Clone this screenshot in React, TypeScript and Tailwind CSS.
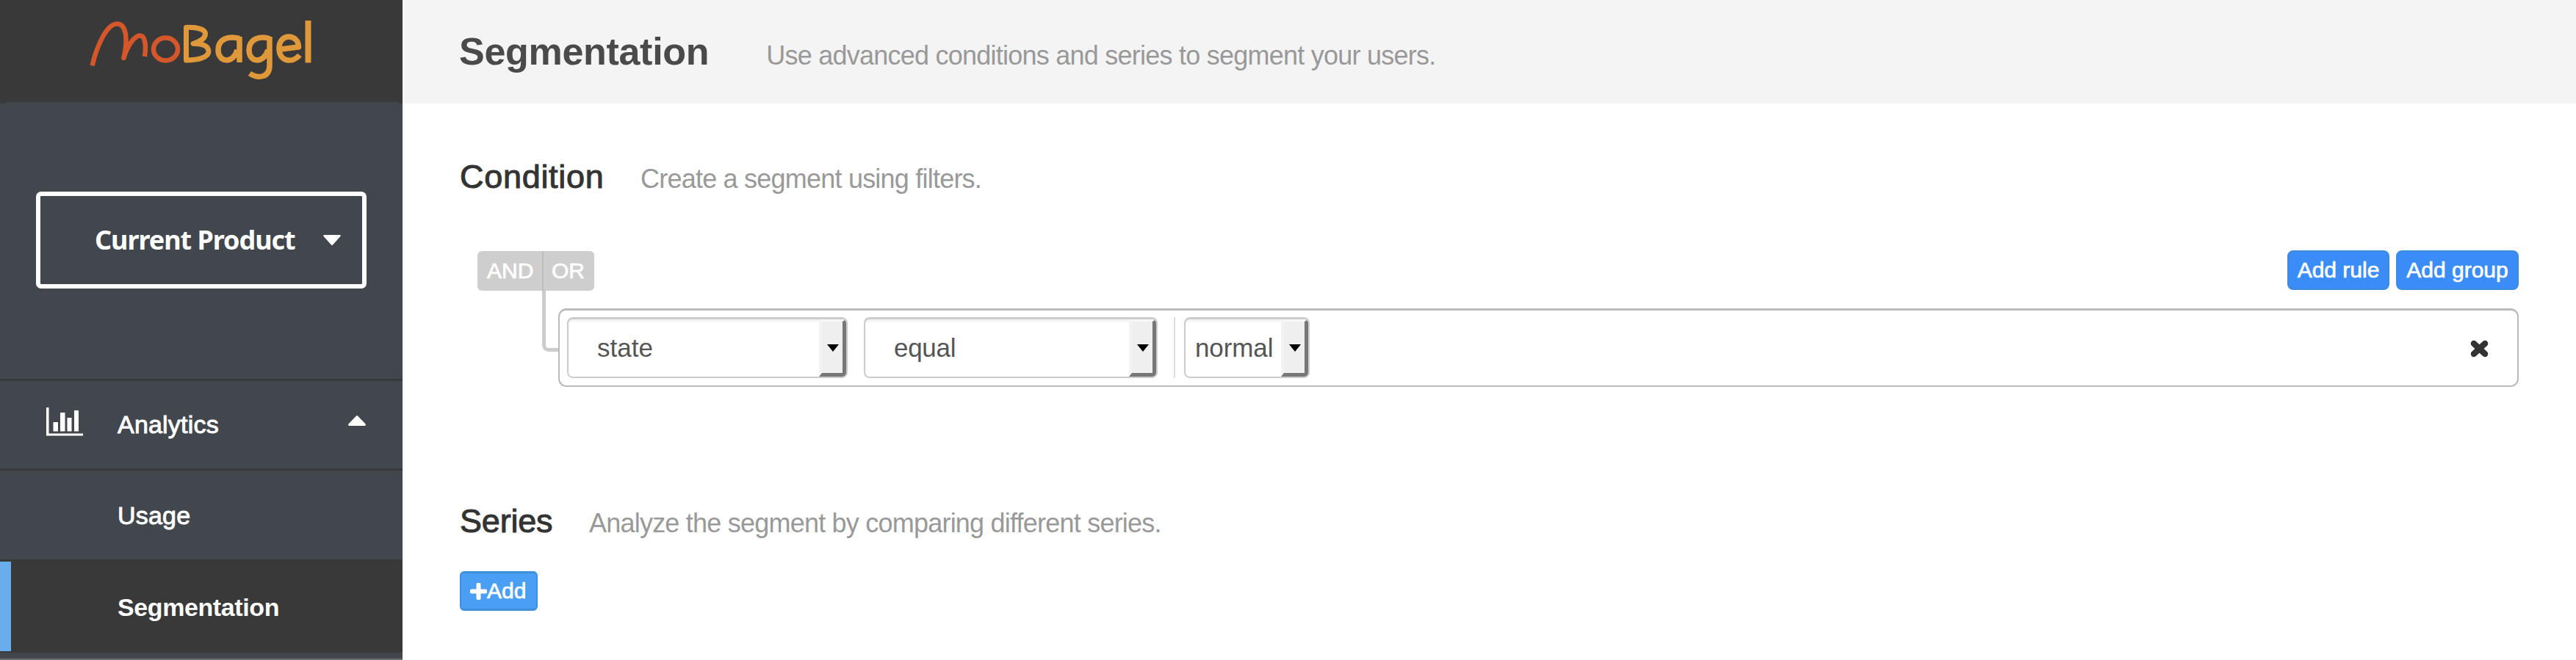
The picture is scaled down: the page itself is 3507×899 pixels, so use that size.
import React from "react";

const Caret = ({ className, up }: { className: string; up?: boolean }) => (
  <svg className={className} viewBox="0 0 24 14" preserveAspectRatio="none" fill="currentColor">
    <path
      d={
        up
          ? "M11 .6Q12-.4 13 .6L23.6 11.6Q24.4 14 22.5 14H1.5Q-.4 14 .4 11.6Z"
          : "M1.2 0H22.8Q24.4 .6 23.4 2L13 13.4Q12 14.4 11 13.4L.6 2Q-.4 .6 1.2 0Z"
      }
    />
  </svg>
);

const Logo = () => (
  <svg className="ml-[110px] mt-[15px] h-[105px] w-[330px]" viewBox="110 15 330 105" fill="none" strokeLinejoin="round">
    <g stroke="#d4562b" strokeWidth="6.5">
      <path d="M125.500 89.500C131 66 144 33 159 32.500C171 32 175 51 168.500 79C174 60 184 49 190 48.500C198 48 199 62 197 77" />
      <ellipse cx="225.500" cy="67" rx="16.500" ry="15.500" />
    </g>
    <g stroke="#e0993a" strokeWidth="7.5">
      <path
        d="M253.500 82V37.500C268 36.500 279.500 40 279.500 46C279.500 53 272 56.500 263 59.500C276 59 284 63 284 70C284 78 270 82 253.500 82Z"
        strokeWidth="7"
      />
      <path d="M326 52.500C309 48 297 54 297 68C297 86 318 87 323 68M326 50V85" />
      <path d="M367 52.500C352 48 339 54 339 68C339 86 359 87 365 68M367 50V88C367.500 107 350 107 340 100" />
      <path d="M379 67.500L406.500 64C406.500 46 380 44 380 66C380 85 399 86 408 75" />
      <path d="M419.500 28V85.500" strokeWidth="8" />
    </g>
  </svg>
);

const ChartIcon = () => (
  <svg className="h-[39px] w-[50px]" viewBox="0 0 50 39" fill="white">
    <path d="M0 0H3.500V35.500H50V38.500H0Z" />
    <path d="M9.500 20H16V32.500H9.500ZM19 7H25.500V32.500H19ZM28.500 14H34.500V32.500H28.500ZM38 4H44V32.500H38Z" />
  </svg>
);

const Select = ({ label, className, text }: { label: string; className: string; text: string }) => (
  <div
    className={`${className} flex h-[83px] overflow-hidden rounded-[8px] border-2 border-t-[3px] border-[#ccc] bg-white shadow-[inset_0_3px_3px_rgba(0,0,0,0.06)]`}
  >
    <span className={`${text} flex-1 whitespace-nowrap pt-[13px] text-[35px] leading-[52px] text-[#555]`}>{label}</span>
    <span className="flex w-[37px] shrink-0 items-start border-b-[5px] border-l-[4px] border-r-[5px] border-t-[3px] border-b-[#777] border-l-[#f3f3f3] border-r-[#777] border-t-[#f6f6f6] bg-[#efefef] pl-[7px] pt-[31px] text-black">
      <svg className="h-[10px] w-[16px]" viewBox="0 0 16 10">
        <path d="M0 0H16L8 10Z" fill="currentColor" />
      </svg>
    </span>
  </div>
);

const SectionHeading = ({ title, note, className }: { title: string; note: string; className: string }) => (
  <div className="flex h-[54px] items-baseline whitespace-nowrap">
    <h2 className={`${className} text-[45px] leading-[54px] text-[#333] [-webkit-text-stroke:1px_#333]`}>{title}</h2>
    <p className="text-[36px] leading-[54px] tracking-[-0.78px] text-[#999]">{note}</p>
  </div>
);

export default function App() {
  return (
    <div className="flex h-[899px] w-[3507px] overflow-hidden bg-white font-['Liberation_Sans',Arial,sans-serif]">
      <aside className="flex w-[548px] shrink-0 flex-col bg-[#42464d] text-white">
        <div className="h-[141px] shrink-0 bg-[#393939]">
          <Logo />
          <div className="ml-[8px] mt-[19px] h-[2px] w-[535px] bg-[#42464d]" />
        </div>
        <div className="h-[375px] shrink-0 pl-[49px] pt-[120px]">
          <button className="flex h-[132px] w-[450px] items-center rounded-[7px] border-[6px] border-white pl-[74px] text-left">
            <span className="w-[311px] whitespace-nowrap font-['Noto_Sans',sans-serif] text-[36px] font-bold leading-[50px] tracking-[-1.05px]">
              Current Product
            </span>
            <Caret className="h-[14px] w-[24px]" />
          </button>
        </div>
        <div className="flex h-[122px] shrink-0 border-t-[3px] border-[#393939] pl-[63px] pt-[36px]">
          <div className="w-[97px]">
            <ChartIcon />
          </div>
          <span className="mt-[3px] w-[314px] text-[34px] leading-[40px] tracking-[0.2px] [-webkit-text-stroke:0.9px_white]">
            Analytics
          </span>
          <Caret up className="mt-[11px] h-[14px] w-[24px]" />
        </div>
        <div className="h-[124px] shrink-0 border-t-[3px] border-[#393939] pl-[160px] pt-[41px] text-[34px] leading-[40px] tracking-[0.2px] [-webkit-text-stroke:0.9px_white]">
          Usage
        </div>
        <div className="h-[127px] shrink-0 bg-[#393939] py-[3px]">
          <div className="h-[122px] border-l-[15px] border-[#6aadec] pl-[145px] pt-[42px] text-[34px] font-bold leading-[40px] tracking-[-0.4px]">
            Segmentation
          </div>
        </div>
        <div className="mt-[8px] h-[2px] bg-[#6b6d72]" />
      </aside>
      <main className="flex-1">
        <header className="flex h-[141px] items-baseline gap-[78px] whitespace-nowrap bg-[#f4f4f4] pl-[77px] pt-[40px]">
          <h1 className="text-[52px] font-bold leading-[60px] tracking-[-0.3px] text-[#4a4a4a]">Segmentation</h1>
          <p className="text-[36px] leading-[60px] tracking-[-0.76px] text-[#999]">
            Use advanced conditions and series to segment your users.
          </p>
        </header>
        <section className="pl-[78px] pr-[78px] pt-[73px]">
          <SectionHeading title="Condition" note="Create a segment using filters." className="w-[246px] tracking-[0.7px]" />
          <div className="mt-[73px] flex items-start justify-between text-[30px] leading-[52px] text-white">
            <div className="ml-[24px] mt-[1px] flex h-[54px] overflow-hidden rounded-[6px] bg-[#cecece]">
              <span className="w-[90px] border-r-2 border-[#bdbdbd] pl-[13px] pt-[1px] [-webkit-text-stroke:0.7px_white]">AND</span>
              <span className="w-[69px] pl-[11px] pt-[1px] [-webkit-text-stroke:0.7px_white]">OR</span>
            </div>
            <div className="flex gap-[9px]">
              <button className="h-[54px] w-[139px] whitespace-nowrap rounded-[8px] border-2 border-[#3f8cdd] bg-[#3a8cf7] leading-[50px] [-webkit-text-stroke:0.7px_white]">
                Add rule
              </button>
              <button className="h-[54px] w-[167px] whitespace-nowrap rounded-[8px] border-2 border-[#3f8cdd] bg-[#3a8cf7] leading-[50px] [-webkit-text-stroke:0.7px_white]">
                Add group
              </button>
            </div>
          </div>
          <div className="flex h-[131px] items-start pl-[112px]">
            <div className="h-[83px] w-[22px] shrink-0 rounded-bl-[9px] border-b-[5px] border-l-[5px] border-[#ccc]" />
            <div className="mt-[24px] flex h-[107px] flex-1 rounded-[11px] border-2 border-t-[3px] border-[#bbb] pl-[10px] pt-[9px]">
              <Select label="state" className="w-[382px]" text="pl-[39px]" />
              <Select label="equal" className="ml-[22px] w-[400px]" text="pl-[39px] tracking-[-0.3px]" />
              <div className="ml-[22px] h-[83px] w-[2px] bg-[#ddd]" />
              <Select label="normal" className="ml-[12px] w-[171px]" text="pl-[13px] tracking-[-0.1px]" />
              <svg className="ml-auto mr-[39px] mt-[31px] h-[24px] w-[25px]" viewBox="0 0 25 24">
                <path d="M5 5L20 19M20 5L5 19" stroke="#333" strokeWidth="8.500" strokeLinecap="round" />
              </svg>
            </div>
          </div>
        </section>
        <section className="pl-[78px] pt-[156px]">
          <SectionHeading
            title="Series"
            note="Analyze the segment by comparing different series."
            className="w-[176px] tracking-[-0.2px]"
          />
          <button className="mt-[41px] flex h-[54px] w-[106px] items-center rounded-[6px] border-2 border-t-[3px] border-b-[3px] border-[#3f8fdc] bg-[#4a9ff4] pl-[12px] text-[30px] leading-[48px] text-white">
            <svg className="h-[23px] w-[23px] shrink-0" viewBox="0 0 23 23">
              <path d="M11.500 2.500V20.500M2.500 11.500H20.500" stroke="white" strokeWidth="6" strokeLinecap="round" />
            </svg>
            <span className="[-webkit-text-stroke:0.7px_white]">Add</span>
          </button>
        </section>
      </main>
    </div>
  );
}
